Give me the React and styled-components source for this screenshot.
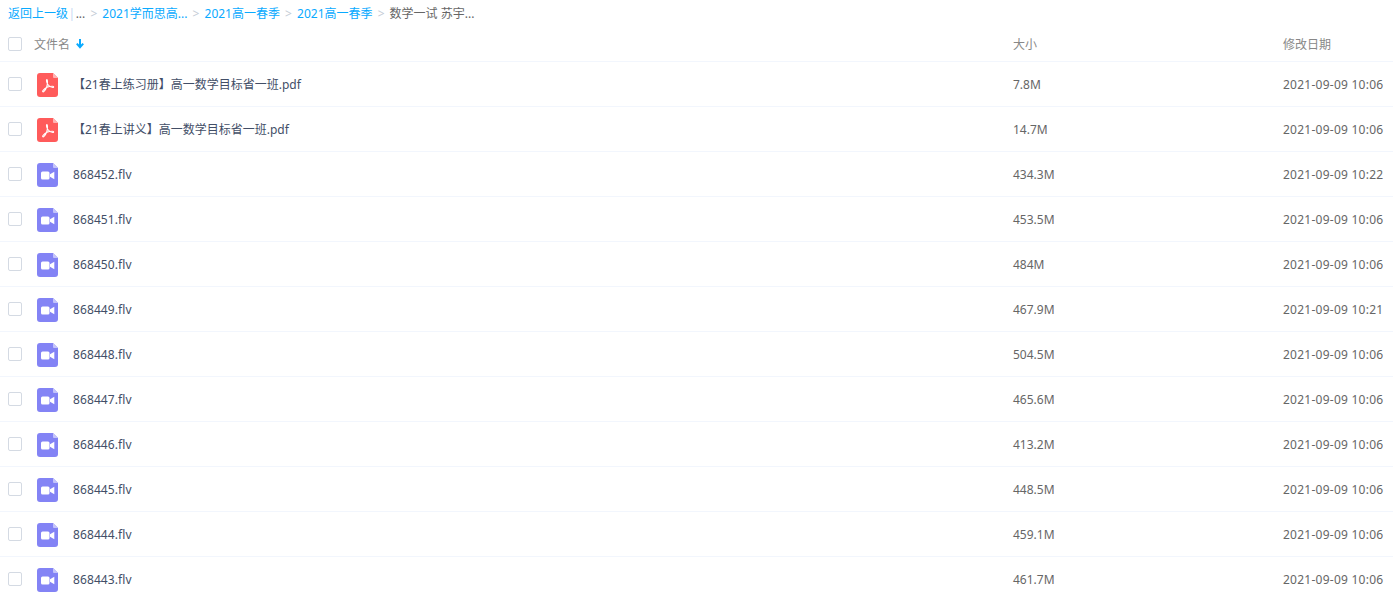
import styled, { createGlobalStyle } from "styled-components";

const GlobalStyle = createGlobalStyle`
  html, body {
    margin: 0;
    height: 100%;
    overflow: hidden;
    background: #fff;
  }
  body {
    font-family: "Noto Sans", "Noto Sans CJK SC", sans-serif;
    font-size: 12px;
  }
`;

const Page = styled.div`
  height: 593px;
  overflow: hidden;
`;

const Breadcrumb = styled.div`
  display: flex;
  align-items: center;
  height: 26px;
  padding-left: 8px;
  color: #666;
  white-space: nowrap;
`;

const CrumbLink = styled.a`
  color: #09aaff;
`;

const Divider = styled.span`
  color: #c5d8f3;
  margin: 0 0.5px;
`;

const Chevron = styled.span`
  color: #c4ccd6;
  margin: 0 5.1px;
`;

const Row = styled.div`
  display: grid;
  grid-template-columns: 34px 39px 940px 270px 1fr;
  align-items: center;
  height: ${({ $header }) => ($header ? "35px" : "44px")};
  border-bottom: 1px solid #f2f6fd;
  color: ${({ $header }) => ($header ? "#888" : "#424e67")};
  white-space: nowrap;
`;

const CheckCell = styled.div`
  padding-left: 8px;
  display: flex;
`;

const Check = styled.span`
  width: 12px;
  height: 12px;
  border: 1px solid #d4dae3;
  border-radius: 2px;
  background: #fff;
`;

const HeaderName = styled.div`
  grid-column: 2 / 4;
  display: flex;
  align-items: center;
  gap: 5px;
`;

const IconCell = styled.div`
  padding: 2px 0 0 3px;
  display: flex;
`;

const FileName = styled.div`
  letter-spacing: ${({ $pdf }) => ($pdf ? "0" : "0.1px")};
`;

const Cell = styled.div`
  color: ${({ $header }) => ($header ? "#888" : "#666")};
`;

const DateCell = styled(Cell)`
  letter-spacing: ${({ $header }) => ($header ? "0" : "0.25px")};
`;

const SortArrow = () => (
  <svg width="10" height="11" viewBox="0 0 10 11">
    <path d="M5 1v8M1.800 5.600 5 9.200 8.200 5.600" fill="none" stroke="#09aaff" strokeWidth="2" />
  </svg>
);

const FileShape = ({ color, fold, children }) => (
  <svg width="21" height="24" viewBox="0 0 21 24">
    <path
      d="M3 0h13l5 5v16a3 3 0 0 1-3 3H3a3 3 0 0 1-3-3V3a3 3 0 0 1 3-3z"
      fill={color}
    />
    <path d="M16 0l5 5h-4a1 1 0 0 1-1-1z" fill={fold} />
    {children}
  </svg>
);

const PdfIcon = () => (
  <FileShape color="#ff5b5b" fold="#ffb3b3">
    <path
      d="M10 6.500c-.9 0-.6 3 .8 5 1.200 1.700 3 3 5 3 1.300 0 1-1.200-.3-1.200-3.500 0-7.500 1.500-9.500 4.200-1 1.500.2 1.800 1.200.7 1.800-2 3.300-6 3.300-9.500 0-1-.2-2.200-.5-2.200z"
      fill="none"
      stroke="#fff"
      strokeWidth="1.100"
      strokeLinejoin="round"
    />
  </FileShape>
);

const VideoIcon = () => (
  <FileShape color="#8383f5" fold="#c4c4fa">
    <rect x="4" y="8.500" width="8.500" height="8" rx="1.500" fill="#fff" />
    <path d="M13 11.300 17.300 8.800v7.400L13 13.700z" fill="#fff" />
  </FileShape>
);

const FILES = [
  { name: "【21春上练习册】高一数学目标省一班.pdf", size: "7.8M", date: "2021-09-09 10:06", pdf: true },
  { name: "【21春上讲义】高一数学目标省一班.pdf", size: "14.7M", date: "2021-09-09 10:06", pdf: true },
  { name: "868452.flv", size: "434.3M", date: "2021-09-09 10:22" },
  { name: "868451.flv", size: "453.5M", date: "2021-09-09 10:06" },
  { name: "868450.flv", size: "484M", date: "2021-09-09 10:06" },
  { name: "868449.flv", size: "467.9M", date: "2021-09-09 10:21" },
  { name: "868448.flv", size: "504.5M", date: "2021-09-09 10:06" },
  { name: "868447.flv", size: "465.6M", date: "2021-09-09 10:06" },
  { name: "868446.flv", size: "413.2M", date: "2021-09-09 10:06" },
  { name: "868445.flv", size: "448.5M", date: "2021-09-09 10:06" },
  { name: "868444.flv", size: "459.1M", date: "2021-09-09 10:06" },
  { name: "868443.flv", size: "461.7M", date: "2021-09-09 10:06" },
];

export default function App() {
  return (
    <Page>
      <GlobalStyle />
      <Breadcrumb>
        <CrumbLink>返回上一级</CrumbLink>
        <Divider>|</Divider>
        <span>...</span>
        <Chevron>&gt;</Chevron>
        <CrumbLink>2021学而思高...</CrumbLink>
        <Chevron>&gt;</Chevron>
        <CrumbLink>2021高一春季</CrumbLink>
        <Chevron>&gt;</Chevron>
        <CrumbLink>2021高一春季</CrumbLink>
        <Chevron>&gt;</Chevron>
        <span>数学一试 苏宇...</span>
      </Breadcrumb>
      <Row $header>
        <CheckCell><Check /></CheckCell>
        <HeaderName>文件名 <SortArrow /></HeaderName>
        <Cell $header>大小</Cell>
        <DateCell $header>修改日期</DateCell>
      </Row>
      {FILES.map((f) => (
        <Row key={f.name}>
          <CheckCell><Check /></CheckCell>
          <IconCell>{f.pdf ? <PdfIcon /> : <VideoIcon />}</IconCell>
          <FileName $pdf={f.pdf}>{f.name}</FileName>
          <Cell>{f.size}</Cell>
          <DateCell>{f.date}</DateCell>
        </Row>
      ))}
    </Page>
  );
}
